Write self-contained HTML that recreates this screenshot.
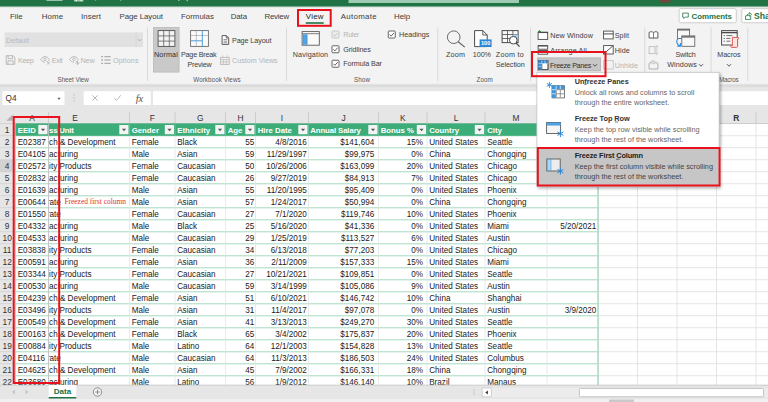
<!DOCTYPE html>
<html><head><meta charset="utf-8"><title>Excel Freeze Panes</title><style>html,body{margin:0;padding:0;}body{width:768px;height:402px;overflow:hidden;position:relative;background:#f3f3f3;font-family:'Liberation Sans',sans-serif;}
span,svg{position:absolute;}svg{left:0;top:0;}span{white-space:pre;}</style></head><body>
<svg width="768" height="402" viewBox="0 0 768 402"><defs><linearGradient id="g1" x1="0" y1="0" x2="0" y2="1"><stop offset="0" stop-color="#217346"/><stop offset="0.5" stop-color="#9fc3ae"/><stop offset="1" stop-color="#f3f3f3"/></linearGradient><linearGradient id="g2" x1="0" y1="0" x2="0" y2="1"><stop offset="0" stop-color="#f0f0f0"/><stop offset="0.45" stop-color="#d9d9d9"/><stop offset="1" stop-color="#e6e6e6"/></linearGradient><filter id="sh" x="-5%" y="-5%" width="112%" height="115%"><feGaussianBlur stdDeviation="1.6"/></filter></defs><rect x="0" y="0" width="768" height="6.2" fill="#217346"/><rect x="0" y="5.8" width="768" height="2" fill="url(#g1)"/><rect x="348.5" y="0" width="170.5" height="3" fill="#9dccb2"/><rect x="46.5" y="0" width="16" height="0.8" fill="#b9d8c6"/><rect x="74" y="0" width="9.5" height="1.5" fill="#9cc7ae"/><rect x="75.5" y="0" width="1.5" height="1.2" fill="#e6f1ea"/><rect x="80.5" y="0" width="1.5" height="1.2" fill="#e6f1ea"/><rect x="95" y="0" width="1.2" height="1" fill="#6fa889"/><rect x="120" y="0" width="1.2" height="1" fill="#6fa889"/><rect x="178" y="0" width="1.5" height="1" fill="#8fbea5"/><rect x="186.5" y="0" width="1.5" height="1.2" fill="#8fbea5"/><path d="M659 0h12c0 4-12 4-12 0z" fill="#6b4a3a"/></svg>
<span style="left:10.00px;top:12px;font-size:7.9px;line-height:9px;color:#404040;letter-spacing:-0.058px;">File</span>
<span style="left:41.75px;top:12px;font-size:7.9px;line-height:9px;color:#404040;letter-spacing:0.107px;">Home</span>
<span style="left:81.00px;top:12px;font-size:7.9px;line-height:9px;color:#404040;letter-spacing:0.040px;">Insert</span>
<span style="left:119.50px;top:12px;font-size:7.9px;line-height:9px;color:#404040;letter-spacing:-0.079px;">Page Layout</span>
<span style="left:181.00px;top:12px;font-size:7.9px;line-height:9px;color:#404040;letter-spacing:0.010px;">Formulas</span>
<span style="left:230.75px;top:12px;font-size:7.9px;line-height:9px;color:#404040;letter-spacing:-0.109px;">Data</span>
<span style="left:264.50px;top:12px;font-size:7.9px;line-height:9px;color:#404040;letter-spacing:-0.234px;">Review</span>
<span style="left:305.75px;top:12px;font-size:7.9px;line-height:9px;color:#222;letter-spacing:0.255px;">View</span>
<span style="left:340.75px;top:12px;font-size:7.9px;line-height:9px;color:#404040;letter-spacing:0.304px;">Automate</span>
<span style="left:394.00px;top:12px;font-size:7.9px;line-height:9px;color:#404040;letter-spacing:-0.062px;">Help</span>
<svg width="768" height="402" viewBox="0 0 768 402"><rect x="305.75" y="22.2" width="18" height="1.6" fill="#217346"/><rect x="679.15" y="8.65" width="57.1" height="14.1" fill="#fff" stroke="#c8c8c8" stroke-width="0.9" rx="1.5"/><g transform="translate(682.2,12.6)"><path d="M0.5 0.5h5.6v4H3L1.6 5.9V4.5H0.5z" fill="none" stroke="#217346" stroke-width="0.8"/></g></svg>
<span style="left:691.50px;top:12px;font-size:7.9px;line-height:9px;color:#217346;letter-spacing:-0.040px;font-weight:700;">Comments</span>
<svg width="768" height="402" viewBox="0 0 768 402"><rect x="741.75" y="8.65" width="39.1" height="14.1" fill="#fff" stroke="#c8c8c8" stroke-width="0.9" rx="1.5"/><g transform="translate(745,12)"><path d="M0.5 3.8v3.6h5.2v-3.4M1.5 4C1.9 2.3 3.2 1.7 4.5 1.7V0.5L6.6 2.4 4.5 4.3V3.1C3.4 3 2.4 3.3 1.5 4z" fill="none" stroke="#217346" stroke-width="0.8"/></g></svg>
<span style="left:754.00px;top:11px;font-size:8.6px;line-height:10px;color:#217346;font-weight:700;">Share</span>
<svg width="768" height="402" viewBox="0 0 768 402"><rect x="4.5" y="32.4" width="138.5" height="14.6" fill="#e1e1e1"/><rect x="135.7" y="32.4" width="0.7" height="14.6" fill="#d2d2d2"/></svg>
<span style="left:6.00px;top:36px;font-size:7.2px;line-height:9px;color:#b9b9b9;letter-spacing:0.027px;">Default</span>
<svg width="768" height="402" viewBox="0 0 768 402"><g transform="translate(136.6,37.8)"><path d="M1 1.2l2 2 2-2" fill="none" stroke="#a8a8a8" stroke-width="0.8"/></g><g transform="translate(5.5,55)"><path d="M0.7 0.7h7l1.6 1.6v7H0.7z M2.6 0.7v3h4.4v-3 M2.4 9.3v-3.4h5.2v3.4" fill="none" stroke="#b4b4b4" stroke-width="0.9"/></g></svg>
<span style="left:18.00px;top:56px;font-size:7.2px;line-height:9px;color:#b4b4b4;letter-spacing:-0.350px;">Keep</span>
<svg width="768" height="402" viewBox="0 0 768 402"><g transform="translate(40,55)"><path d="M0.6 4.5C2 2.3 3.8 1.6 5 1.6s3 0.7 4.4 2.9C8.6 5.8 7.8 6.4 7 6.8 M0.6 4.5C1.8 6.4 3.4 7.2 5 7.3" fill="none" stroke="#b4b4b4" stroke-width="0.9"/><circle cx="5" cy="4.4" r="1.3" fill="none" stroke="#b4b4b4" stroke-width="0.8"/><path d="M7 6.5l3 3M10 6.5l-3 3" stroke="#b4b4b4" stroke-width="0.9"/></g></svg>
<span style="left:51.75px;top:56px;font-size:7.2px;line-height:9px;color:#b4b4b4;letter-spacing:-0.313px;">Exit</span>
<svg width="768" height="402" viewBox="0 0 768 402"><g transform="translate(69,55)"><path d="M0.6 4.5C2 2.3 3.8 1.6 5 1.6s3 0.7 4.4 2.9C8.6 5.8 7.8 6.4 7 6.8 M0.6 4.5C1.8 6.4 3.4 7.2 5 7.3" fill="none" stroke="#b4b4b4" stroke-width="0.9"/><circle cx="5" cy="4.4" r="1.3" fill="none" stroke="#b4b4b4" stroke-width="0.8"/><path d="M8.5 6v4M6.5 8h4" stroke="#b4b4b4" stroke-width="0.9"/></g></svg>
<span style="left:80.50px;top:56px;font-size:7.2px;line-height:9px;color:#b4b4b4;letter-spacing:-0.135px;">New</span>
<svg width="768" height="402" viewBox="0 0 768 402"><g transform="translate(101,55.5)"><path d="M0.3 1.2h1.6M0.3 4.5h1.6M0.3 7.8h1.6" stroke="#a0a0a0" stroke-width="1.3"/><path d="M3.3 1.2h6.4M3.3 4.5h6.4M3.3 7.8h6.4" stroke="#a0a0a0" stroke-width="1"/></g></svg>
<span style="left:113.00px;top:56px;font-size:7.2px;line-height:9px;color:#b4b4b4;letter-spacing:0.134px;">Options</span>
<span style="left:57.50px;top:76px;font-size:6.3px;line-height:7px;color:#555;letter-spacing:-0.051px;">Sheet View</span>
<svg width="768" height="402" viewBox="0 0 768 402"><rect x="147.2" y="27.5" width="0.8" height="53.5" fill="#d2d2d2"/><rect x="153.4" y="27.4" width="25.7" height="44.7" fill="#c9c9c9" stroke="#b9b9b9" stroke-width="0.8"/><g transform="translate(157.5,30)"><rect x="0.6" y="0.6" width="16.8" height="15.8" fill="#f2f2f2" stroke="#505050" stroke-width="0.9"/><path d="M6.2 0.6v15.8M11.8 0.6v15.8M0.6 5.9h16.8M0.6 11.1h16.8" stroke="#5a5a5a" stroke-width="0.75"/></g></svg>
<span style="left:154.00px;top:50px;font-size:7.2px;line-height:9px;color:#303030;letter-spacing:0.133px;">Normal</span>
<svg width="768" height="402" viewBox="0 0 768 402"><g transform="translate(190,30)"><rect x="0.6" y="0.6" width="17.8" height="15.8" fill="#fafafa" stroke="#6a6a6a" stroke-width="0.9"/><path d="M6.3 0.6v15.8M0.6 5.5h17.8" stroke="#9a9a9a" stroke-width="0.6"/><path d="M12.3 0.6v15.8M0.6 10.8h11.7" stroke="#3a96dd" stroke-width="0.9"/></g></svg>
<span style="left:181.00px;top:50px;font-size:7.2px;line-height:9px;color:#404040;letter-spacing:-0.212px;">Page Break</span>
<span style="left:187.50px;top:60px;font-size:7.2px;line-height:9px;color:#404040;letter-spacing:-0.230px;">Preview</span>
<svg width="768" height="402" viewBox="0 0 768 402"><g transform="translate(221.5,35)"><path d="M0.6 0.6h4.2l2.4 2.4v6.4H0.6z" fill="#fff" stroke="#4a4a4a" stroke-width="0.9"/><path d="M4.8 0.6v2.4h2.4" fill="none" stroke="#4a4a4a" stroke-width="0.8"/><path d="M2 4.6h3.8M2 6.2h3.8M2 7.8h3.8" stroke="#4a4a4a" stroke-width="0.6"/></g></svg>
<span style="left:232.00px;top:36px;font-size:7.2px;line-height:9px;color:#404040;letter-spacing:-0.085px;">Page Layout</span>
<svg width="768" height="402" viewBox="0 0 768 402"><g transform="translate(220,55)"><rect x="0.6" y="2.4" width="8.6" height="7" fill="none" stroke="#b9b9b9" stroke-width="0.9"/><path d="M0.6 4.6h8.6M2.6 0.4v2M7 0.4v2M3.4 4.6v4.8M6.2 4.6v4.8M0.6 7h8.6" stroke="#b9b9b9" stroke-width="0.7"/></g></svg>
<span style="left:232.00px;top:56px;font-size:7.2px;line-height:9px;color:#b4b4b4;letter-spacing:-0.011px;">Custom Views</span>
<span style="left:193.25px;top:76px;font-size:6.3px;line-height:7px;color:#555;letter-spacing:0.058px;">Workbook Views</span>
<svg width="768" height="402" viewBox="0 0 768 402"><rect x="286.2" y="27.5" width="0.8" height="53.5" fill="#d2d2d2"/><g transform="translate(301.5,31)"><rect x="0.6" y="0.6" width="17.2" height="13.6" fill="#fbfbfb" stroke="#5a5a5a" stroke-width="0.9"/><path d="M0.6 2.7h17.2" stroke="#5a5a5a" stroke-width="0.8"/><rect x="1.2" y="3.3" width="4.8" height="10.4" fill="#3a96dd"/><path d="M2.6 3.3v10.4M4.4 3.3v10.4" stroke="#8cc4f0" stroke-width="0.5"/></g></svg>
<span style="left:292.75px;top:50px;font-size:7.2px;line-height:9px;color:#404040;letter-spacing:0.148px;">Navigation</span>
<svg width="768" height="402" viewBox="0 0 768 402"><g transform="translate(331.5,30.5)"><rect x="0.5" y="0.5" width="7" height="7" rx="0.8" fill="#ececec" stroke="#c4c4c4" stroke-width="0.9"/><path d="M1.9 4.1l1.5 1.5 2.8-3.2" fill="none" stroke="#c4c4c4" stroke-width="0.9"/></g></svg>
<span style="left:343.25px;top:30px;font-size:7.2px;line-height:9px;color:#b4b4b4;letter-spacing:-0.291px;">Ruler</span>
<svg width="768" height="402" viewBox="0 0 768 402"><g transform="translate(331.5,45.25)"><rect x="0.5" y="0.5" width="7" height="7" rx="0.8" fill="#fff" stroke="#555" stroke-width="0.9"/><path d="M1.9 4.1l1.5 1.5 2.8-3.2" fill="none" stroke="#555" stroke-width="0.9"/></g></svg>
<span style="left:343.25px;top:45px;font-size:7.2px;line-height:9px;color:#404040;letter-spacing:-0.101px;">Gridlines</span>
<svg width="768" height="402" viewBox="0 0 768 402"><g transform="translate(331.5,59.75)"><rect x="0.5" y="0.5" width="7" height="7" rx="0.8" fill="#fff" stroke="#555" stroke-width="0.9"/><path d="M1.9 4.1l1.5 1.5 2.8-3.2" fill="none" stroke="#555" stroke-width="0.9"/></g></svg>
<span style="left:343.25px;top:59px;font-size:7.2px;line-height:9px;color:#404040;letter-spacing:-0.078px;">Formula Bar</span>
<svg width="768" height="402" viewBox="0 0 768 402"><g transform="translate(387.75,30.5)"><rect x="0.5" y="0.5" width="7" height="7" rx="0.8" fill="#fff" stroke="#555" stroke-width="0.9"/><path d="M1.9 4.1l1.5 1.5 2.8-3.2" fill="none" stroke="#555" stroke-width="0.9"/></g></svg>
<span style="left:399.00px;top:30px;font-size:7.2px;line-height:9px;color:#404040;letter-spacing:0.010px;">Headings</span>
<span style="left:354.00px;top:76px;font-size:6.3px;line-height:7px;color:#555;letter-spacing:0.060px;">Show</span>
<svg width="768" height="402" viewBox="0 0 768 402"><rect x="437.4" y="27.5" width="0.8" height="53.5" fill="#d2d2d2"/><g transform="translate(446.5,30)"><circle cx="7.2" cy="7.2" r="6.3" fill="none" stroke="#5a5a5a" stroke-width="0.9"/><path d="M11.7 11.7l6.6 5.4" stroke="#5a5a5a" stroke-width="1.1"/></g></svg>
<span style="left:446.00px;top:50px;font-size:7.2px;line-height:9px;color:#404040;letter-spacing:0.211px;">Zoom</span>
<svg width="768" height="402" viewBox="0 0 768 402"><g transform="translate(474,30)"><path d="M0.6 0.6h8.2l4.4 4.4v11.6H0.6z" fill="#fff" stroke="#4a4a4a" stroke-width="1"/><path d="M8.8 0.6v4.4h4.4" fill="none" stroke="#4a4a4a" stroke-width="0.9"/><rect x="5.6" y="9.4" width="12" height="7.6" fill="#2b88d8"/><text x="11.6" y="15.3" font-size="5.6" font-family="Liberation Sans,sans-serif" fill="#fff" text-anchor="middle" font-weight="700">100</text></g></svg>
<span style="left:472.75px;top:50px;font-size:7.2px;line-height:9px;color:#404040;letter-spacing:-0.041px;">100%</span>
<svg width="768" height="402" viewBox="0 0 768 402"><g transform="translate(501.5,30)"><rect x="0.6" y="0.6" width="16" height="12" fill="#fafafa" stroke="#4a4a4a" stroke-width="1"/><path d="M0.6 4.5h16M0.6 8.5h8M6 0.6v12M11.4 0.6v5" stroke="#4a4a4a" stroke-width="0.8"/><rect x="11.4" y="4.5" width="5.2" height="4" fill="#9fd0f5"/><circle cx="11.8" cy="10.2" r="3.8" fill="#fff" stroke="#4a4a4a" stroke-width="1"/><path d="M14.5 13l3.6 3.6" stroke="#4a4a4a" stroke-width="1.2"/></g></svg>
<span style="left:495.75px;top:50px;font-size:7.2px;line-height:9px;color:#404040;letter-spacing:0.263px;">Zoom to</span>
<span style="left:495.75px;top:60px;font-size:7.2px;line-height:9px;color:#404040;letter-spacing:-0.069px;">Selection</span>
<span style="left:476.50px;top:76px;font-size:6.3px;line-height:7px;color:#555;letter-spacing:0.036px;">Zoom</span>
<svg width="768" height="402" viewBox="0 0 768 402"><rect x="530" y="27.5" width="0.8" height="53.5" fill="#d2d2d2"/><g transform="translate(537.5,30)"><rect x="0.6" y="2.4" width="9.6" height="7" fill="#fff" stroke="#4a4a4a" stroke-width="0.9"/><path d="M0.6 2.4h9.6" stroke="#4a4a4a" stroke-width="1.3"/><path d="M2 0v3M0.5 1.5h3" stroke="#1e8e3e" stroke-width="0.9"/></g></svg>
<span style="left:550.25px;top:31px;font-size:7.2px;line-height:9px;color:#404040;letter-spacing:0.074px;">New Window</span>
<svg width="768" height="402" viewBox="0 0 768 402"><g transform="translate(537.5,45)"><rect x="0.6" y="0.6" width="9.6" height="3.6" fill="#fff" stroke="#4a4a4a" stroke-width="0.9"/><rect x="0.6" y="5.6" width="9.6" height="3.6" fill="#fff" stroke="#4a4a4a" stroke-width="0.9"/><path d="M0.6 1h9.6M0.6 6h9.6" stroke="#4a4a4a" stroke-width="1.2"/></g></svg>
<span style="left:550.25px;top:46px;font-size:7.2px;line-height:9px;color:#404040;letter-spacing:0.139px;">Arrange All</span>
<svg width="768" height="402" viewBox="0 0 768 402"><rect x="537.4" y="57.9" width="63.2" height="12.9" fill="#c6c6c6" stroke="#b0b0b0" stroke-width="0.8"/><g transform="translate(538,60)"><rect x="0.5" y="0.5" width="9.5" height="9" fill="#fff" stroke="#4a4a4a" stroke-width="0.8"/><rect x="0.5" y="0.5" width="3.4" height="9" fill="#2b88d8"/><rect x="0.5" y="0.5" width="9.5" height="3.2" fill="#2b88d8"/><path d="M3.9 0.5v9M7 0.5v9M0.5 3.7h9.5M0.5 6.6h9.5" stroke="#fff" stroke-width="0.6"/><path d="M3.9 3.7v5.8h6.1V3.7" fill="none" stroke="#4a4a4a" stroke-width="0.7"/></g></svg>
<span style="left:550.00px;top:61px;font-size:7.2px;line-height:9px;color:#303030;letter-spacing:-0.319px;">Freeze Panes</span>
<svg width="768" height="402" viewBox="0 0 768 402"><g transform="translate(592,63)"><path d="M1 1.2l2 2 2-2" fill="none" stroke="#444" stroke-width="0.9"/></g><g transform="translate(603,30.5)"><rect x="0.6" y="0.6" width="9.6" height="7.8" fill="#fff" stroke="#4a4a4a" stroke-width="0.9"/><path d="M0.6 3.4h9.6" stroke="#4a4a4a" stroke-width="1"/></g></svg>
<span style="left:614.75px;top:31px;font-size:7.2px;line-height:9px;color:#404040;letter-spacing:0.049px;">Split</span>
<svg width="768" height="402" viewBox="0 0 768 402"><g transform="translate(603,45)"><rect x="0.6" y="0.6" width="9.6" height="8.4" fill="#fff" stroke="#4a4a4a" stroke-width="0.9"/><path d="M0.6 9L10.2 0.6" stroke="#4a4a4a" stroke-width="0.9"/></g></svg>
<span style="left:614.75px;top:46px;font-size:7.2px;line-height:9px;color:#404040;letter-spacing:0.048px;">Hide</span>
<svg width="768" height="402" viewBox="0 0 768 402"><g transform="translate(603,60)"><rect x="0.6" y="0.6" width="9.6" height="8.4" fill="none" stroke="#c4c4c4" stroke-width="0.9"/></g></svg>
<span style="left:614.75px;top:61px;font-size:7.2px;line-height:9px;color:#b4b4b4;letter-spacing:0.072px;">Unhide</span>
<svg width="768" height="402" viewBox="0 0 768 402"><rect x="644.4" y="27.5" width="0.8" height="48" fill="#d2d2d2"/><g transform="translate(648.5,31)"><path d="M0.6 7V1.4c1.6-1 3-1 4.4 0.3C6.4 0.4 7.8 0.4 9.4 1.4V7H6c-0.5 0-0.8 0.3-1 0.6C4.8 7.3 4.5 7 4 7z" fill="#fff" stroke="#4a4a4a" stroke-width="0.9"/><path d="M5 1.7v5.6" stroke="#4a4a4a" stroke-width="0.7"/></g><g transform="translate(648.5,45)"><rect x="0.6" y="1.6" width="6" height="7" fill="none" stroke="#bdbdbd" stroke-width="0.9"/><path d="M8.4 0.6v9M7.4 2l1-1.4 1 1.4M7.4 8.2l1 1.4 1-1.4" fill="none" stroke="#bdbdbd" stroke-width="0.7"/></g><g transform="translate(648.5,60)"><path d="M0.6 9V3.4c1.6-1 3-1 4.4 0.3C6.4 2.4 7.8 2.4 9.4 3.4V9z" fill="none" stroke="#a8a8a8" stroke-width="0.9"/><path d="M2 2.4c1-2 4-2 5 0" fill="none" stroke="#a8a8a8" stroke-width="0.8"/></g><g transform="translate(676,28.5)"><rect x="1.6" y="0.6" width="12" height="9.4" fill="#f8f8f8" stroke="#5a5a5a" stroke-width="0.8"/><path d="M1.6 1.4h12" stroke="#5a5a5a" stroke-width="1.2"/><rect x="5.8" y="7.4" width="13" height="10.4" fill="#f8f8f8" stroke="#5a5a5a" stroke-width="0.8"/><path d="M5.8 8.4h13" stroke="#5a5a5a" stroke-width="1.3"/><path d="M2.4 9.6C-0.4 12 0.4 16 4 17.6M4.4 14.6v3.2H1.2" fill="none" stroke="#2b88d8" stroke-width="1.1"/></g></svg>
<span style="left:675.50px;top:50px;font-size:7.2px;line-height:9px;color:#404040;letter-spacing:-0.201px;">Switch</span>
<span style="left:667.25px;top:60px;font-size:7.2px;line-height:9px;color:#404040;letter-spacing:0.077px;">Windows</span>
<svg width="768" height="402" viewBox="0 0 768 402"><g transform="translate(698,63)"><path d="M1 1.2l2 2 2-2" fill="none" stroke="#444" stroke-width="0.9"/></g><rect x="710.6" y="27.5" width="0.8" height="53.5" fill="#d2d2d2"/><g transform="translate(721,30)"><rect x="0.6" y="0.6" width="15.6" height="14.4" fill="#fafafa" stroke="#4a4a4a" stroke-width="1"/><path d="M0.6 2.6h15.6" stroke="#4a4a4a" stroke-width="1.4"/><path d="M2.6 5.6h1.4M2.6 8.4h1.4M2.6 11.2h1.4M5.4 5.6h6M5.4 8.4h4M5.4 11.2h4" stroke="#4a4a4a" stroke-width="0.8"/><path d="M11.4 7.4h5.6c1 0 1 1.6 0 1.6h-0.4v7.4c0 0.6-0.4 1-1 1h-5c-1.2 0-1.2-1.8 0-1.8h0.8z" fill="#fde7e5" stroke="#e8473f" stroke-width="0.9"/></g></svg>
<span style="left:717.25px;top:50px;font-size:7.2px;line-height:9px;color:#404040;letter-spacing:-0.059px;">Macros</span>
<svg width="768" height="402" viewBox="0 0 768 402"><g transform="translate(726,63)"><path d="M1 1.2l2 2 2-2" fill="none" stroke="#444" stroke-width="0.9"/></g></svg>
<span style="left:719.00px;top:76px;font-size:6.3px;line-height:7px;color:#555;letter-spacing:-0.192px;">Macros</span>
<svg width="768" height="402" viewBox="0 0 768 402"><rect x="747.4" y="27.5" width="0.8" height="53.5" fill="#d2d2d2"/><rect x="0" y="83.3" width="768" height="5" fill="url(#g2)"/><rect x="0" y="87.5" width="768" height="36.5" fill="#e6e6e6"/><rect x="2.5" y="91.2" width="62" height="14" fill="#fff"/></svg>
<span style="left:5.50px;top:94px;font-size:8.25px;line-height:9px;color:#333;">Q4</span>
<svg width="768" height="402" viewBox="0 0 768 402"><g transform="translate(56.5,97)"><path d="M0.8 0.8h3.4L2.5 3z" fill="#666"/></g><rect x="73.6" y="94.5" width="0.9" height="0.9" fill="#9a9a9a"/><rect x="73.6" y="97.5" width="0.9" height="0.9" fill="#9a9a9a"/><rect x="73.6" y="100.5" width="0.9" height="0.9" fill="#9a9a9a"/><rect x="83.75" y="91.2" width="67" height="14" fill="#fff"/><g transform="translate(91.5,94.5)"><path d="M0.8 0.8l5.4 5.4M6.2 0.8L0.8 6.2" stroke="#a6a6a6" stroke-width="0.8"/></g><g transform="translate(113.5,94.5)"><path d="M0.8 3.8l2.2 2.2L7.2 0.8" fill="none" stroke="#a6a6a6" stroke-width="0.8"/></g></svg>
<span style="left:135.63px;top:93px;font-size:10.5px;line-height:11px;color:#555;font-family:'Liberation Serif',serif;font-style:italic;">fx</span>
<svg width="768" height="402" viewBox="0 0 768 402"><rect x="153" y="91.2" width="615" height="14" fill="#fff"/><rect x="0" y="123.8" width="768" height="261.2" fill="#fff"/><rect x="0" y="105" width="768" height="18.8" fill="#e6e6e6"/><rect x="0" y="123.1" width="768" height="0.8" fill="#c8c8c8"/><g transform="translate(6,114.2)"><path d="M6.6 0.4v6.2H0.4z" fill="#b2b2b2"/></g></svg>
<span style="left:29.20px;top:113px;font-size:8.4px;line-height:10px;color:#333;">A</span>
<svg width="768" height="402" viewBox="0 0 768 402"><rect x="48.1" y="112" width="0.8" height="11.5" fill="#c6c6c6"/></svg>
<span style="left:72.20px;top:113px;font-size:8.4px;line-height:10px;color:#333;">E</span>
<svg width="768" height="402" viewBox="0 0 768 402"><rect x="129.1" y="112" width="0.8" height="11.5" fill="#c6c6c6"/></svg>
<span style="left:149.68px;top:113px;font-size:8.4px;line-height:10px;color:#333;">F</span>
<svg width="768" height="402" viewBox="0 0 768 402"><rect x="174.6" y="112" width="0.8" height="11.5" fill="#c6c6c6"/></svg>
<span style="left:196.98px;top:113px;font-size:8.4px;line-height:10px;color:#333;">G</span>
<svg width="768" height="402" viewBox="0 0 768 402"><rect x="225.1" y="112" width="0.8" height="11.5" fill="#c6c6c6"/></svg>
<span style="left:237.47px;top:113px;font-size:8.4px;line-height:10px;color:#333;">H</span>
<svg width="768" height="402" viewBox="0 0 768 402"><rect x="255.1" y="112" width="0.8" height="11.5" fill="#c6c6c6"/></svg>
<span style="left:280.83px;top:113px;font-size:8.4px;line-height:10px;color:#333;">I</span>
<svg width="768" height="402" viewBox="0 0 768 402"><rect x="308.1" y="112" width="0.8" height="11.5" fill="#c6c6c6"/></svg>
<span style="left:341.40px;top:113px;font-size:8.4px;line-height:10px;color:#333;">J</span>
<svg width="768" height="402" viewBox="0 0 768 402"><rect x="378.1" y="112" width="0.8" height="11.5" fill="#c6c6c6"/></svg>
<span style="left:399.95px;top:113px;font-size:8.4px;line-height:10px;color:#333;">K</span>
<svg width="768" height="402" viewBox="0 0 768 402"><rect x="426.6" y="112" width="0.8" height="11.5" fill="#c6c6c6"/></svg>
<span style="left:453.66px;top:113px;font-size:8.4px;line-height:10px;color:#333;">L</span>
<svg width="768" height="402" viewBox="0 0 768 402"><rect x="484.6" y="112" width="0.8" height="11.5" fill="#c6c6c6"/></svg>
<span style="left:512.50px;top:113px;font-size:8.4px;line-height:10px;color:#333;">M</span>
<svg width="768" height="402" viewBox="0 0 768 402"><rect x="546.6" y="112" width="0.8" height="11.5" fill="#c6c6c6"/></svg>
<span style="left:569.47px;top:113px;font-size:8.4px;line-height:10px;color:#333;">N</span>
<svg width="768" height="402" viewBox="0 0 768 402"><rect x="597.6" y="112" width="0.8" height="11.5" fill="#c6c6c6"/></svg>
<span style="left:614.48px;top:113px;font-size:8.4px;line-height:10px;color:#333;">O</span>
<svg width="768" height="402" viewBox="0 0 768 402"><rect x="637.1" y="112" width="0.8" height="11.5" fill="#c6c6c6"/></svg>
<span style="left:654.45px;top:113px;font-size:8.4px;line-height:10px;color:#333;">P</span>
<svg width="768" height="402" viewBox="0 0 768 402"><rect x="676.6" y="112" width="0.8" height="11.5" fill="#c6c6c6"/></svg>
<span style="left:693.48px;top:113px;font-size:8.4px;line-height:10px;color:#333;">Q</span>
<svg width="768" height="402" viewBox="0 0 768 402"><rect x="716.1" y="112" width="0.8" height="11.5" fill="#c6c6c6"/></svg>
<span style="left:733.22px;top:113px;font-size:8.4px;line-height:10px;color:#333;font-weight:700;">R</span>
<svg width="768" height="402" viewBox="0 0 768 402"><rect x="755.6" y="112" width="0.8" height="11.5" fill="#c6c6c6"/></svg>
<span style="left:772.70px;top:113px;font-size:8.4px;line-height:10px;color:#333;">S</span>
<svg width="768" height="402" viewBox="0 0 768 402"><rect x="794.6" y="112" width="0.8" height="11.5" fill="#c6c6c6"/><rect x="0" y="123.8" width="15.5" height="261.2" fill="#e6e6e6"/><rect x="0" y="159.8" width="15.5" height="12" fill="#d2d2d2"/><rect x="15" y="123.8" width="0.8" height="261.2" fill="#c4c4c4"/></svg>
<span style="left:4.86px;top:125px;font-size:8.4px;line-height:10px;color:#333;">1</span>
<svg width="768" height="402" viewBox="0 0 768 402"><rect x="0" y="135.4" width="15.5" height="0.7" fill="#cfcfcf"/></svg>
<span style="left:4.86px;top:137px;font-size:8.4px;line-height:10px;color:#333;">2</span>
<svg width="768" height="402" viewBox="0 0 768 402"><rect x="0" y="147.4" width="15.5" height="0.7" fill="#cfcfcf"/></svg>
<span style="left:4.86px;top:149px;font-size:8.4px;line-height:10px;color:#333;">3</span>
<svg width="768" height="402" viewBox="0 0 768 402"><rect x="0" y="159.4" width="15.5" height="0.7" fill="#cfcfcf"/></svg>
<span style="left:4.86px;top:161px;font-size:8.4px;line-height:10px;color:#333;">4</span>
<svg width="768" height="402" viewBox="0 0 768 402"><rect x="0" y="171.4" width="15.5" height="0.7" fill="#cfcfcf"/></svg>
<span style="left:4.86px;top:173px;font-size:8.4px;line-height:10px;color:#333;">5</span>
<svg width="768" height="402" viewBox="0 0 768 402"><rect x="0" y="183.4" width="15.5" height="0.7" fill="#cfcfcf"/></svg>
<span style="left:4.86px;top:185px;font-size:8.4px;line-height:10px;color:#333;">6</span>
<svg width="768" height="402" viewBox="0 0 768 402"><rect x="0" y="195.4" width="15.5" height="0.7" fill="#cfcfcf"/></svg>
<span style="left:4.86px;top:197px;font-size:8.4px;line-height:10px;color:#333;">7</span>
<svg width="768" height="402" viewBox="0 0 768 402"><rect x="0" y="207.4" width="15.5" height="0.7" fill="#cfcfcf"/></svg>
<span style="left:4.86px;top:209px;font-size:8.4px;line-height:10px;color:#333;">8</span>
<svg width="768" height="402" viewBox="0 0 768 402"><rect x="0" y="219.4" width="15.5" height="0.7" fill="#cfcfcf"/></svg>
<span style="left:4.86px;top:221px;font-size:8.4px;line-height:10px;color:#333;">9</span>
<svg width="768" height="402" viewBox="0 0 768 402"><rect x="0" y="231.4" width="15.5" height="0.7" fill="#cfcfcf"/></svg>
<span style="left:2.53px;top:233px;font-size:8.4px;line-height:10px;color:#333;">10</span>
<svg width="768" height="402" viewBox="0 0 768 402"><rect x="0" y="243.4" width="15.5" height="0.7" fill="#cfcfcf"/></svg>
<span style="left:2.84px;top:245px;font-size:8.4px;line-height:10px;color:#333;">11</span>
<svg width="768" height="402" viewBox="0 0 768 402"><rect x="0" y="255.4" width="15.5" height="0.7" fill="#cfcfcf"/></svg>
<span style="left:2.53px;top:257px;font-size:8.4px;line-height:10px;color:#333;">12</span>
<svg width="768" height="402" viewBox="0 0 768 402"><rect x="0" y="267.4" width="15.5" height="0.7" fill="#cfcfcf"/></svg>
<span style="left:2.53px;top:269px;font-size:8.4px;line-height:10px;color:#333;">13</span>
<svg width="768" height="402" viewBox="0 0 768 402"><rect x="0" y="279.4" width="15.5" height="0.7" fill="#cfcfcf"/></svg>
<span style="left:2.53px;top:281px;font-size:8.4px;line-height:10px;color:#333;">14</span>
<svg width="768" height="402" viewBox="0 0 768 402"><rect x="0" y="291.4" width="15.5" height="0.7" fill="#cfcfcf"/></svg>
<span style="left:2.53px;top:293px;font-size:8.4px;line-height:10px;color:#333;">15</span>
<svg width="768" height="402" viewBox="0 0 768 402"><rect x="0" y="303.4" width="15.5" height="0.7" fill="#cfcfcf"/></svg>
<span style="left:2.53px;top:305px;font-size:8.4px;line-height:10px;color:#333;">16</span>
<svg width="768" height="402" viewBox="0 0 768 402"><rect x="0" y="315.4" width="15.5" height="0.7" fill="#cfcfcf"/></svg>
<span style="left:2.53px;top:317px;font-size:8.4px;line-height:10px;color:#333;">17</span>
<svg width="768" height="402" viewBox="0 0 768 402"><rect x="0" y="327.4" width="15.5" height="0.7" fill="#cfcfcf"/></svg>
<span style="left:2.53px;top:329px;font-size:8.4px;line-height:10px;color:#333;">18</span>
<svg width="768" height="402" viewBox="0 0 768 402"><rect x="0" y="339.4" width="15.5" height="0.7" fill="#cfcfcf"/></svg>
<span style="left:2.53px;top:341px;font-size:8.4px;line-height:10px;color:#333;">19</span>
<svg width="768" height="402" viewBox="0 0 768 402"><rect x="0" y="351.4" width="15.5" height="0.7" fill="#cfcfcf"/></svg>
<span style="left:2.53px;top:353px;font-size:8.4px;line-height:10px;color:#333;">20</span>
<svg width="768" height="402" viewBox="0 0 768 402"><rect x="0" y="363.4" width="15.5" height="0.7" fill="#cfcfcf"/></svg>
<span style="left:2.53px;top:365px;font-size:8.4px;line-height:10px;color:#333;">21</span>
<svg width="768" height="402" viewBox="0 0 768 402"><rect x="0" y="375.4" width="15.5" height="0.7" fill="#cfcfcf"/></svg>
<span style="left:2.53px;top:377px;font-size:8.4px;line-height:10px;color:#333;">22</span>
<svg width="768" height="402" viewBox="0 0 768 402"><rect x="0" y="387.4" width="15.5" height="0.7" fill="#cfcfcf"/><rect x="597.6" y="123.8" width="0.8" height="261.2" fill="#dedede"/><rect x="637.1" y="123.8" width="0.8" height="261.2" fill="#dedede"/><rect x="676.6" y="123.8" width="0.8" height="261.2" fill="#dedede"/><rect x="716.1" y="123.8" width="0.8" height="261.2" fill="#dedede"/><rect x="755.6" y="123.8" width="0.8" height="261.2" fill="#dedede"/><rect x="794.6" y="123.8" width="0.8" height="261.2" fill="#dedede"/><rect x="598" y="135.4" width="170" height="0.8" fill="#dedede"/><rect x="598" y="147.4" width="170" height="0.8" fill="#dedede"/><rect x="598" y="159.4" width="170" height="0.8" fill="#dedede"/><rect x="598" y="171.4" width="170" height="0.8" fill="#dedede"/><rect x="598" y="183.4" width="170" height="0.8" fill="#dedede"/><rect x="598" y="195.4" width="170" height="0.8" fill="#dedede"/><rect x="598" y="207.4" width="170" height="0.8" fill="#dedede"/><rect x="598" y="219.4" width="170" height="0.8" fill="#dedede"/><rect x="598" y="231.4" width="170" height="0.8" fill="#dedede"/><rect x="598" y="243.4" width="170" height="0.8" fill="#dedede"/><rect x="598" y="255.4" width="170" height="0.8" fill="#dedede"/><rect x="598" y="267.4" width="170" height="0.8" fill="#dedede"/><rect x="598" y="279.4" width="170" height="0.8" fill="#dedede"/><rect x="598" y="291.4" width="170" height="0.8" fill="#dedede"/><rect x="598" y="303.4" width="170" height="0.8" fill="#dedede"/><rect x="598" y="315.4" width="170" height="0.8" fill="#dedede"/><rect x="598" y="327.4" width="170" height="0.8" fill="#dedede"/><rect x="598" y="339.4" width="170" height="0.8" fill="#dedede"/><rect x="598" y="351.4" width="170" height="0.8" fill="#dedede"/><rect x="598" y="363.4" width="170" height="0.8" fill="#dedede"/><rect x="598" y="375.4" width="170" height="0.8" fill="#dedede"/><rect x="598" y="387.4" width="170" height="0.8" fill="#dedede"/><rect x="15.5" y="135.3" width="582.5" height="1" fill="#a5d9bf"/><rect x="15.5" y="147.3" width="582.5" height="1" fill="#a5d9bf"/><rect x="15.5" y="159.3" width="582.5" height="1" fill="#a5d9bf"/><rect x="15.5" y="171.3" width="582.5" height="1" fill="#a5d9bf"/><rect x="15.5" y="183.3" width="582.5" height="1" fill="#a5d9bf"/><rect x="15.5" y="195.3" width="582.5" height="1" fill="#a5d9bf"/><rect x="15.5" y="207.3" width="582.5" height="1" fill="#a5d9bf"/><rect x="15.5" y="219.3" width="582.5" height="1" fill="#a5d9bf"/><rect x="15.5" y="231.3" width="582.5" height="1" fill="#a5d9bf"/><rect x="15.5" y="243.3" width="582.5" height="1" fill="#a5d9bf"/><rect x="15.5" y="255.3" width="582.5" height="1" fill="#a5d9bf"/><rect x="15.5" y="267.3" width="582.5" height="1" fill="#a5d9bf"/><rect x="15.5" y="279.3" width="582.5" height="1" fill="#a5d9bf"/><rect x="15.5" y="291.3" width="582.5" height="1" fill="#a5d9bf"/><rect x="15.5" y="303.3" width="582.5" height="1" fill="#a5d9bf"/><rect x="15.5" y="315.3" width="582.5" height="1" fill="#a5d9bf"/><rect x="15.5" y="327.3" width="582.5" height="1" fill="#a5d9bf"/><rect x="15.5" y="339.3" width="582.5" height="1" fill="#a5d9bf"/><rect x="15.5" y="351.3" width="582.5" height="1" fill="#a5d9bf"/><rect x="15.5" y="363.3" width="582.5" height="1" fill="#a5d9bf"/><rect x="15.5" y="375.3" width="582.5" height="1" fill="#a5d9bf"/><rect x="15.5" y="387.3" width="582.5" height="1" fill="#a5d9bf"/><rect x="48.1" y="135.8" width="0.8" height="249.2" fill="#e2e6e4"/><rect x="129.1" y="135.8" width="0.8" height="249.2" fill="#e2e6e4"/><rect x="174.6" y="135.8" width="0.8" height="249.2" fill="#e2e6e4"/><rect x="225.1" y="135.8" width="0.8" height="249.2" fill="#e2e6e4"/><rect x="255.1" y="135.8" width="0.8" height="249.2" fill="#e2e6e4"/><rect x="308.1" y="135.8" width="0.8" height="249.2" fill="#e2e6e4"/><rect x="378.1" y="135.8" width="0.8" height="249.2" fill="#e2e6e4"/><rect x="426.6" y="135.8" width="0.8" height="249.2" fill="#e2e6e4"/><rect x="484.6" y="135.8" width="0.8" height="249.2" fill="#e2e6e4"/><rect x="546.6" y="135.8" width="0.8" height="249.2" fill="#e2e6e4"/><rect x="597.6" y="135.8" width="0.8" height="249.2" fill="#e2e6e4"/><rect x="597.6" y="123.8" width="0.9" height="261.2" fill="#8fcfae"/><rect x="15.5" y="123.4" width="531.5" height="12.4" fill="#3cad79"/><rect x="48.1" y="123.8" width="0.8" height="12.0" fill="#6cc39b"/><rect x="129.1" y="123.8" width="0.8" height="12.0" fill="#6cc39b"/><rect x="174.6" y="123.8" width="0.8" height="12.0" fill="#6cc39b"/><rect x="225.1" y="123.8" width="0.8" height="12.0" fill="#6cc39b"/><rect x="255.1" y="123.8" width="0.8" height="12.0" fill="#6cc39b"/><rect x="308.1" y="123.8" width="0.8" height="12.0" fill="#6cc39b"/><rect x="378.1" y="123.8" width="0.8" height="12.0" fill="#6cc39b"/><rect x="426.6" y="123.8" width="0.8" height="12.0" fill="#6cc39b"/><rect x="484.6" y="123.8" width="0.8" height="12.0" fill="#6cc39b"/><rect x="48.1" y="123.8" width="0.8" height="261.2" fill="#bdbdbd"/></svg>
<span style="left:17.70px;top:126px;font-size:7.8px;line-height:9px;color:#fff;font-weight:700;">EEID</span>
<svg width="768" height="402" viewBox="0 0 768 402"><rect x="38.3" y="124.9" width="9.2" height="9.3" fill="#f4f4f4" rx="0.5"/><g transform="translate(40.5,128.2)"><path d="M0.4 0.5h4.2L2.5 3z" fill="#555"/></g></svg>
<span style="left:49.00px;top:126px;font-size:7.8px;line-height:9px;color:#fff;letter-spacing:-0.201px;font-weight:700;">ss Unit</span>
<svg width="768" height="402" viewBox="0 0 768 402"><rect x="119.3" y="124.9" width="9.2" height="9.3" fill="#f4f4f4" rx="0.5"/><g transform="translate(121.5,128.2)"><path d="M0.4 0.5h4.2L2.5 3z" fill="#555"/></g></svg>
<span style="left:131.70px;top:126px;font-size:7.8px;line-height:9px;color:#fff;font-weight:700;">Gender</span>
<svg width="768" height="402" viewBox="0 0 768 402"><rect x="164.8" y="124.9" width="9.2" height="9.3" fill="#f4f4f4" rx="0.5"/><g transform="translate(167.0,128.2)"><path d="M0.4 0.5h4.2L2.5 3z" fill="#555"/></g></svg>
<span style="left:177.20px;top:126px;font-size:7.8px;line-height:9px;color:#fff;font-weight:700;">Ethnicity</span>
<svg width="768" height="402" viewBox="0 0 768 402"><rect x="215.3" y="124.9" width="9.2" height="9.3" fill="#f4f4f4" rx="0.5"/><g transform="translate(217.5,128.2)"><path d="M0.4 0.5h4.2L2.5 3z" fill="#555"/></g></svg>
<span style="left:227.70px;top:126px;font-size:7.8px;line-height:9px;color:#fff;font-weight:700;">Age</span>
<svg width="768" height="402" viewBox="0 0 768 402"><rect x="245.3" y="124.9" width="9.2" height="9.3" fill="#f4f4f4" rx="0.5"/><g transform="translate(247.5,128.2)"><path d="M0.4 0.5h4.2L2.5 3z" fill="#555"/></g></svg>
<span style="left:257.70px;top:126px;font-size:7.8px;line-height:9px;color:#fff;font-weight:700;">Hire Date</span>
<svg width="768" height="402" viewBox="0 0 768 402"><rect x="298.3" y="124.9" width="9.2" height="9.3" fill="#f4f4f4" rx="0.5"/><g transform="translate(300.5,128.2)"><path d="M0.4 0.5h4.2L2.5 3z" fill="#555"/></g></svg>
<span style="left:310.30px;top:126px;font-size:7.8px;line-height:9px;color:#fff;letter-spacing:-0.117px;font-weight:700;">Annual Salary</span>
<svg width="768" height="402" viewBox="0 0 768 402"><rect x="368.3" y="124.9" width="9.2" height="9.3" fill="#f4f4f4" rx="0.5"/><g transform="translate(370.5,128.2)"><path d="M0.4 0.5h4.2L2.5 3z" fill="#555"/></g></svg>
<span style="left:380.70px;top:126px;font-size:7.8px;line-height:9px;color:#fff;font-weight:700;">Bonus %</span>
<svg width="768" height="402" viewBox="0 0 768 402"><rect x="416.8" y="124.9" width="9.2" height="9.3" fill="#f4f4f4" rx="0.5"/><g transform="translate(419.0,128.2)"><path d="M0.4 0.5h4.2L2.5 3z" fill="#555"/></g></svg>
<span style="left:429.20px;top:126px;font-size:7.8px;line-height:9px;color:#fff;font-weight:700;">Country</span>
<svg width="768" height="402" viewBox="0 0 768 402"><rect x="474.8" y="124.9" width="9.2" height="9.3" fill="#f4f4f4" rx="0.5"/><g transform="translate(477.0,128.2)"><path d="M0.4 0.5h4.2L2.5 3z" fill="#555"/></g></svg>
<span style="left:487.20px;top:126px;font-size:7.8px;line-height:9px;color:#fff;font-weight:700;">City</span>
<span style="left:17.70px;top:138px;font-size:8.15px;line-height:9px;color:#1a1a1a;">E02387</span>
<span style="left:49.10px;top:138px;font-size:8.15px;line-height:9px;color:#1a1a1a;">ch &amp; Development</span>
<span style="left:131.70px;top:138px;font-size:8.15px;line-height:9px;color:#1a1a1a;">Female</span>
<span style="left:177.20px;top:138px;font-size:8.15px;line-height:9px;color:#1a1a1a;">Black</span>
<span style="left:245.13px;top:138px;font-size:8.15px;line-height:9px;color:#1a1a1a;">55</span>
<span style="left:275.27px;top:138px;font-size:8.15px;line-height:9px;color:#1a1a1a;">4/8/2016</span>
<span style="left:340.31px;top:138px;font-size:8.15px;line-height:9px;color:#1a1a1a;">$141,604</span>
<span style="left:406.69px;top:138px;font-size:8.15px;line-height:9px;color:#1a1a1a;">15%</span>
<span style="left:429.20px;top:138px;font-size:8.15px;line-height:9px;color:#1a1a1a;">United States</span>
<span style="left:487.20px;top:138px;font-size:8.15px;line-height:9px;color:#1a1a1a;">Seattle</span>
<span style="left:17.70px;top:150px;font-size:8.15px;line-height:9px;color:#1a1a1a;">E04105</span>
<span style="left:49.10px;top:150px;font-size:8.15px;line-height:9px;color:#1a1a1a;">acturing</span>
<span style="left:131.70px;top:150px;font-size:8.15px;line-height:9px;color:#1a1a1a;">Male</span>
<span style="left:177.20px;top:150px;font-size:8.15px;line-height:9px;color:#1a1a1a;">Asian</span>
<span style="left:245.13px;top:150px;font-size:8.15px;line-height:9px;color:#1a1a1a;">59</span>
<span style="left:266.81px;top:150px;font-size:8.15px;line-height:9px;color:#1a1a1a;">11/29/1997</span>
<span style="left:344.84px;top:150px;font-size:8.15px;line-height:9px;color:#1a1a1a;">$99,975</span>
<span style="left:411.22px;top:150px;font-size:8.15px;line-height:9px;color:#1a1a1a;">0%</span>
<span style="left:429.20px;top:150px;font-size:8.15px;line-height:9px;color:#1a1a1a;">China</span>
<span style="left:487.20px;top:150px;font-size:8.15px;line-height:9px;color:#1a1a1a;">Chongqing</span>
<span style="left:17.70px;top:162px;font-size:8.15px;line-height:9px;color:#1a1a1a;">E02572</span>
<span style="left:49.10px;top:162px;font-size:8.15px;line-height:9px;color:#1a1a1a;">ity Products</span>
<span style="left:131.70px;top:162px;font-size:8.15px;line-height:9px;color:#1a1a1a;">Female</span>
<span style="left:177.20px;top:162px;font-size:8.15px;line-height:9px;color:#1a1a1a;">Caucasian</span>
<span style="left:245.13px;top:162px;font-size:8.15px;line-height:9px;color:#1a1a1a;">50</span>
<span style="left:266.21px;top:162px;font-size:8.15px;line-height:9px;color:#1a1a1a;">10/26/2006</span>
<span style="left:340.31px;top:162px;font-size:8.15px;line-height:9px;color:#1a1a1a;">$163,099</span>
<span style="left:406.69px;top:162px;font-size:8.15px;line-height:9px;color:#1a1a1a;">20%</span>
<span style="left:429.20px;top:162px;font-size:8.15px;line-height:9px;color:#1a1a1a;">United States</span>
<span style="left:487.20px;top:162px;font-size:8.15px;line-height:9px;color:#1a1a1a;">Chicago</span>
<span style="left:17.70px;top:174px;font-size:8.15px;line-height:9px;color:#1a1a1a;">E02832</span>
<span style="left:49.10px;top:174px;font-size:8.15px;line-height:9px;color:#1a1a1a;">acturing</span>
<span style="left:131.70px;top:174px;font-size:8.15px;line-height:9px;color:#1a1a1a;">Female</span>
<span style="left:177.20px;top:174px;font-size:8.15px;line-height:9px;color:#1a1a1a;">Caucasian</span>
<span style="left:245.13px;top:174px;font-size:8.15px;line-height:9px;color:#1a1a1a;">26</span>
<span style="left:270.74px;top:174px;font-size:8.15px;line-height:9px;color:#1a1a1a;">9/27/2019</span>
<span style="left:344.84px;top:174px;font-size:8.15px;line-height:9px;color:#1a1a1a;">$84,913</span>
<span style="left:411.22px;top:174px;font-size:8.15px;line-height:9px;color:#1a1a1a;">7%</span>
<span style="left:429.20px;top:174px;font-size:8.15px;line-height:9px;color:#1a1a1a;">United States</span>
<span style="left:487.20px;top:174px;font-size:8.15px;line-height:9px;color:#1a1a1a;">Chicago</span>
<span style="left:17.70px;top:186px;font-size:8.15px;line-height:9px;color:#1a1a1a;">E01639</span>
<span style="left:49.10px;top:186px;font-size:8.15px;line-height:9px;color:#1a1a1a;">acturing</span>
<span style="left:131.70px;top:186px;font-size:8.15px;line-height:9px;color:#1a1a1a;">Male</span>
<span style="left:177.20px;top:186px;font-size:8.15px;line-height:9px;color:#1a1a1a;">Asian</span>
<span style="left:245.13px;top:186px;font-size:8.15px;line-height:9px;color:#1a1a1a;">55</span>
<span style="left:266.81px;top:186px;font-size:8.15px;line-height:9px;color:#1a1a1a;">11/20/1995</span>
<span style="left:344.84px;top:186px;font-size:8.15px;line-height:9px;color:#1a1a1a;">$95,409</span>
<span style="left:411.22px;top:186px;font-size:8.15px;line-height:9px;color:#1a1a1a;">0%</span>
<span style="left:429.20px;top:186px;font-size:8.15px;line-height:9px;color:#1a1a1a;">United States</span>
<span style="left:487.20px;top:186px;font-size:8.15px;line-height:9px;color:#1a1a1a;">Phoenix</span>
<span style="left:17.70px;top:198px;font-size:8.15px;line-height:9px;color:#1a1a1a;">E00644</span>
<span style="left:46.90px;top:198px;font-size:8.15px;line-height:9px;color:#1a1a1a;clip-path:inset(0 0 0 2px);">rate</span>
<span style="left:131.70px;top:198px;font-size:8.15px;line-height:9px;color:#1a1a1a;">Male</span>
<span style="left:177.20px;top:198px;font-size:8.15px;line-height:9px;color:#1a1a1a;">Asian</span>
<span style="left:245.13px;top:198px;font-size:8.15px;line-height:9px;color:#1a1a1a;">57</span>
<span style="left:270.74px;top:198px;font-size:8.15px;line-height:9px;color:#1a1a1a;">1/24/2017</span>
<span style="left:344.84px;top:198px;font-size:8.15px;line-height:9px;color:#1a1a1a;">$50,994</span>
<span style="left:411.22px;top:198px;font-size:8.15px;line-height:9px;color:#1a1a1a;">0%</span>
<span style="left:429.20px;top:198px;font-size:8.15px;line-height:9px;color:#1a1a1a;">China</span>
<span style="left:487.20px;top:198px;font-size:8.15px;line-height:9px;color:#1a1a1a;">Chongqing</span>
<span style="left:17.70px;top:210px;font-size:8.15px;line-height:9px;color:#1a1a1a;">E01550</span>
<span style="left:46.90px;top:210px;font-size:8.15px;line-height:9px;color:#1a1a1a;clip-path:inset(0 0 0 2px);">rate</span>
<span style="left:131.70px;top:210px;font-size:8.15px;line-height:9px;color:#1a1a1a;">Female</span>
<span style="left:177.20px;top:210px;font-size:8.15px;line-height:9px;color:#1a1a1a;">Caucasian</span>
<span style="left:245.13px;top:210px;font-size:8.15px;line-height:9px;color:#1a1a1a;">27</span>
<span style="left:275.27px;top:210px;font-size:8.15px;line-height:9px;color:#1a1a1a;">7/1/2020</span>
<span style="left:340.91px;top:210px;font-size:8.15px;line-height:9px;color:#1a1a1a;">$119,746</span>
<span style="left:406.69px;top:210px;font-size:8.15px;line-height:9px;color:#1a1a1a;">10%</span>
<span style="left:429.20px;top:210px;font-size:8.15px;line-height:9px;color:#1a1a1a;">United States</span>
<span style="left:487.20px;top:210px;font-size:8.15px;line-height:9px;color:#1a1a1a;">Phoenix</span>
<span style="left:17.70px;top:222px;font-size:8.15px;line-height:9px;color:#1a1a1a;">E04332</span>
<span style="left:49.10px;top:222px;font-size:8.15px;line-height:9px;color:#1a1a1a;">acturing</span>
<span style="left:131.70px;top:222px;font-size:8.15px;line-height:9px;color:#1a1a1a;">Male</span>
<span style="left:177.20px;top:222px;font-size:8.15px;line-height:9px;color:#1a1a1a;">Black</span>
<span style="left:245.13px;top:222px;font-size:8.15px;line-height:9px;color:#1a1a1a;">25</span>
<span style="left:270.74px;top:222px;font-size:8.15px;line-height:9px;color:#1a1a1a;">5/16/2020</span>
<span style="left:344.84px;top:222px;font-size:8.15px;line-height:9px;color:#1a1a1a;">$41,336</span>
<span style="left:411.22px;top:222px;font-size:8.15px;line-height:9px;color:#1a1a1a;">0%</span>
<span style="left:429.20px;top:222px;font-size:8.15px;line-height:9px;color:#1a1a1a;">United States</span>
<span style="left:487.20px;top:222px;font-size:8.15px;line-height:9px;color:#1a1a1a;">Miami</span>
<span style="left:560.24px;top:222px;font-size:8.15px;line-height:9px;color:#1a1a1a;">5/20/2021</span>
<span style="left:17.70px;top:234px;font-size:8.15px;line-height:9px;color:#1a1a1a;">E04533</span>
<span style="left:49.10px;top:234px;font-size:8.15px;line-height:9px;color:#1a1a1a;">acturing</span>
<span style="left:131.70px;top:234px;font-size:8.15px;line-height:9px;color:#1a1a1a;">Male</span>
<span style="left:177.20px;top:234px;font-size:8.15px;line-height:9px;color:#1a1a1a;">Caucasian</span>
<span style="left:245.13px;top:234px;font-size:8.15px;line-height:9px;color:#1a1a1a;">29</span>
<span style="left:270.74px;top:234px;font-size:8.15px;line-height:9px;color:#1a1a1a;">1/25/2019</span>
<span style="left:340.91px;top:234px;font-size:8.15px;line-height:9px;color:#1a1a1a;">$113,527</span>
<span style="left:411.22px;top:234px;font-size:8.15px;line-height:9px;color:#1a1a1a;">6%</span>
<span style="left:429.20px;top:234px;font-size:8.15px;line-height:9px;color:#1a1a1a;">United States</span>
<span style="left:487.20px;top:234px;font-size:8.15px;line-height:9px;color:#1a1a1a;">Austin</span>
<span style="left:17.70px;top:246px;font-size:8.15px;line-height:9px;color:#1a1a1a;">E03838</span>
<span style="left:49.10px;top:246px;font-size:8.15px;line-height:9px;color:#1a1a1a;">ity Products</span>
<span style="left:131.70px;top:246px;font-size:8.15px;line-height:9px;color:#1a1a1a;">Female</span>
<span style="left:177.20px;top:246px;font-size:8.15px;line-height:9px;color:#1a1a1a;">Caucasian</span>
<span style="left:245.13px;top:246px;font-size:8.15px;line-height:9px;color:#1a1a1a;">34</span>
<span style="left:270.74px;top:246px;font-size:8.15px;line-height:9px;color:#1a1a1a;">6/13/2018</span>
<span style="left:344.84px;top:246px;font-size:8.15px;line-height:9px;color:#1a1a1a;">$77,203</span>
<span style="left:411.22px;top:246px;font-size:8.15px;line-height:9px;color:#1a1a1a;">0%</span>
<span style="left:429.20px;top:246px;font-size:8.15px;line-height:9px;color:#1a1a1a;">United States</span>
<span style="left:487.20px;top:246px;font-size:8.15px;line-height:9px;color:#1a1a1a;">Chicago</span>
<span style="left:17.70px;top:258px;font-size:8.15px;line-height:9px;color:#1a1a1a;">E00591</span>
<span style="left:49.10px;top:258px;font-size:8.15px;line-height:9px;color:#1a1a1a;">acturing</span>
<span style="left:131.70px;top:258px;font-size:8.15px;line-height:9px;color:#1a1a1a;">Female</span>
<span style="left:177.20px;top:258px;font-size:8.15px;line-height:9px;color:#1a1a1a;">Asian</span>
<span style="left:245.13px;top:258px;font-size:8.15px;line-height:9px;color:#1a1a1a;">36</span>
<span style="left:271.35px;top:258px;font-size:8.15px;line-height:9px;color:#1a1a1a;">2/11/2009</span>
<span style="left:340.31px;top:258px;font-size:8.15px;line-height:9px;color:#1a1a1a;">$157,333</span>
<span style="left:406.69px;top:258px;font-size:8.15px;line-height:9px;color:#1a1a1a;">15%</span>
<span style="left:429.20px;top:258px;font-size:8.15px;line-height:9px;color:#1a1a1a;">United States</span>
<span style="left:487.20px;top:258px;font-size:8.15px;line-height:9px;color:#1a1a1a;">Miami</span>
<span style="left:17.70px;top:270px;font-size:8.15px;line-height:9px;color:#1a1a1a;">E03344</span>
<span style="left:49.10px;top:270px;font-size:8.15px;line-height:9px;color:#1a1a1a;">ity Products</span>
<span style="left:131.70px;top:270px;font-size:8.15px;line-height:9px;color:#1a1a1a;">Female</span>
<span style="left:177.20px;top:270px;font-size:8.15px;line-height:9px;color:#1a1a1a;">Caucasian</span>
<span style="left:245.13px;top:270px;font-size:8.15px;line-height:9px;color:#1a1a1a;">27</span>
<span style="left:266.21px;top:270px;font-size:8.15px;line-height:9px;color:#1a1a1a;">10/21/2021</span>
<span style="left:340.31px;top:270px;font-size:8.15px;line-height:9px;color:#1a1a1a;">$109,851</span>
<span style="left:411.22px;top:270px;font-size:8.15px;line-height:9px;color:#1a1a1a;">0%</span>
<span style="left:429.20px;top:270px;font-size:8.15px;line-height:9px;color:#1a1a1a;">United States</span>
<span style="left:487.20px;top:270px;font-size:8.15px;line-height:9px;color:#1a1a1a;">Seattle</span>
<span style="left:17.70px;top:282px;font-size:8.15px;line-height:9px;color:#1a1a1a;">E00530</span>
<span style="left:49.10px;top:282px;font-size:8.15px;line-height:9px;color:#1a1a1a;">acturing</span>
<span style="left:131.70px;top:282px;font-size:8.15px;line-height:9px;color:#1a1a1a;">Male</span>
<span style="left:177.20px;top:282px;font-size:8.15px;line-height:9px;color:#1a1a1a;">Caucasian</span>
<span style="left:245.13px;top:282px;font-size:8.15px;line-height:9px;color:#1a1a1a;">59</span>
<span style="left:270.74px;top:282px;font-size:8.15px;line-height:9px;color:#1a1a1a;">3/14/1999</span>
<span style="left:340.31px;top:282px;font-size:8.15px;line-height:9px;color:#1a1a1a;">$105,086</span>
<span style="left:411.22px;top:282px;font-size:8.15px;line-height:9px;color:#1a1a1a;">9%</span>
<span style="left:429.20px;top:282px;font-size:8.15px;line-height:9px;color:#1a1a1a;">United States</span>
<span style="left:487.20px;top:282px;font-size:8.15px;line-height:9px;color:#1a1a1a;">Austin</span>
<span style="left:17.70px;top:294px;font-size:8.15px;line-height:9px;color:#1a1a1a;">E04239</span>
<span style="left:49.10px;top:294px;font-size:8.15px;line-height:9px;color:#1a1a1a;">ch &amp; Development</span>
<span style="left:131.70px;top:294px;font-size:8.15px;line-height:9px;color:#1a1a1a;">Female</span>
<span style="left:177.20px;top:294px;font-size:8.15px;line-height:9px;color:#1a1a1a;">Asian</span>
<span style="left:245.13px;top:294px;font-size:8.15px;line-height:9px;color:#1a1a1a;">51</span>
<span style="left:270.74px;top:294px;font-size:8.15px;line-height:9px;color:#1a1a1a;">6/10/2021</span>
<span style="left:340.31px;top:294px;font-size:8.15px;line-height:9px;color:#1a1a1a;">$146,742</span>
<span style="left:406.69px;top:294px;font-size:8.15px;line-height:9px;color:#1a1a1a;">10%</span>
<span style="left:429.20px;top:294px;font-size:8.15px;line-height:9px;color:#1a1a1a;">China</span>
<span style="left:487.20px;top:294px;font-size:8.15px;line-height:9px;color:#1a1a1a;">Shanghai</span>
<span style="left:17.70px;top:306px;font-size:8.15px;line-height:9px;color:#1a1a1a;">E03496</span>
<span style="left:49.10px;top:306px;font-size:8.15px;line-height:9px;color:#1a1a1a;">ity Products</span>
<span style="left:131.70px;top:306px;font-size:8.15px;line-height:9px;color:#1a1a1a;">Male</span>
<span style="left:177.20px;top:306px;font-size:8.15px;line-height:9px;color:#1a1a1a;">Asian</span>
<span style="left:245.13px;top:306px;font-size:8.15px;line-height:9px;color:#1a1a1a;">31</span>
<span style="left:271.35px;top:306px;font-size:8.15px;line-height:9px;color:#1a1a1a;">11/4/2017</span>
<span style="left:344.84px;top:306px;font-size:8.15px;line-height:9px;color:#1a1a1a;">$97,078</span>
<span style="left:411.22px;top:306px;font-size:8.15px;line-height:9px;color:#1a1a1a;">0%</span>
<span style="left:429.20px;top:306px;font-size:8.15px;line-height:9px;color:#1a1a1a;">United States</span>
<span style="left:487.20px;top:306px;font-size:8.15px;line-height:9px;color:#1a1a1a;">Austin</span>
<span style="left:564.77px;top:306px;font-size:8.15px;line-height:9px;color:#1a1a1a;">3/9/2020</span>
<span style="left:17.70px;top:318px;font-size:8.15px;line-height:9px;color:#1a1a1a;">E00549</span>
<span style="left:49.10px;top:318px;font-size:8.15px;line-height:9px;color:#1a1a1a;">ch &amp; Development</span>
<span style="left:131.70px;top:318px;font-size:8.15px;line-height:9px;color:#1a1a1a;">Female</span>
<span style="left:177.20px;top:318px;font-size:8.15px;line-height:9px;color:#1a1a1a;">Asian</span>
<span style="left:245.13px;top:318px;font-size:8.15px;line-height:9px;color:#1a1a1a;">41</span>
<span style="left:270.74px;top:318px;font-size:8.15px;line-height:9px;color:#1a1a1a;">3/13/2013</span>
<span style="left:340.31px;top:318px;font-size:8.15px;line-height:9px;color:#1a1a1a;">$249,270</span>
<span style="left:406.69px;top:318px;font-size:8.15px;line-height:9px;color:#1a1a1a;">30%</span>
<span style="left:429.20px;top:318px;font-size:8.15px;line-height:9px;color:#1a1a1a;">United States</span>
<span style="left:487.20px;top:318px;font-size:8.15px;line-height:9px;color:#1a1a1a;">Seattle</span>
<span style="left:17.70px;top:330px;font-size:8.15px;line-height:9px;color:#1a1a1a;">E00163</span>
<span style="left:49.10px;top:330px;font-size:8.15px;line-height:9px;color:#1a1a1a;">ch &amp; Development</span>
<span style="left:131.70px;top:330px;font-size:8.15px;line-height:9px;color:#1a1a1a;">Female</span>
<span style="left:177.20px;top:330px;font-size:8.15px;line-height:9px;color:#1a1a1a;">Black</span>
<span style="left:245.13px;top:330px;font-size:8.15px;line-height:9px;color:#1a1a1a;">65</span>
<span style="left:275.27px;top:330px;font-size:8.15px;line-height:9px;color:#1a1a1a;">3/4/2002</span>
<span style="left:340.31px;top:330px;font-size:8.15px;line-height:9px;color:#1a1a1a;">$175,837</span>
<span style="left:406.69px;top:330px;font-size:8.15px;line-height:9px;color:#1a1a1a;">20%</span>
<span style="left:429.20px;top:330px;font-size:8.15px;line-height:9px;color:#1a1a1a;">United States</span>
<span style="left:487.20px;top:330px;font-size:8.15px;line-height:9px;color:#1a1a1a;">Phoenix</span>
<span style="left:17.70px;top:342px;font-size:8.15px;line-height:9px;color:#1a1a1a;">E00884</span>
<span style="left:49.10px;top:342px;font-size:8.15px;line-height:9px;color:#1a1a1a;">ity Products</span>
<span style="left:131.70px;top:342px;font-size:8.15px;line-height:9px;color:#1a1a1a;">Male</span>
<span style="left:177.20px;top:342px;font-size:8.15px;line-height:9px;color:#1a1a1a;">Latino</span>
<span style="left:245.13px;top:342px;font-size:8.15px;line-height:9px;color:#1a1a1a;">64</span>
<span style="left:270.74px;top:342px;font-size:8.15px;line-height:9px;color:#1a1a1a;">12/1/2003</span>
<span style="left:340.31px;top:342px;font-size:8.15px;line-height:9px;color:#1a1a1a;">$154,828</span>
<span style="left:406.69px;top:342px;font-size:8.15px;line-height:9px;color:#1a1a1a;">13%</span>
<span style="left:429.20px;top:342px;font-size:8.15px;line-height:9px;color:#1a1a1a;">United States</span>
<span style="left:487.20px;top:342px;font-size:8.15px;line-height:9px;color:#1a1a1a;">Seattle</span>
<span style="left:17.70px;top:354px;font-size:8.15px;line-height:9px;color:#1a1a1a;">E04116</span>
<span style="left:46.90px;top:354px;font-size:8.15px;line-height:9px;color:#1a1a1a;clip-path:inset(0 0 0 2px);">rate</span>
<span style="left:131.70px;top:354px;font-size:8.15px;line-height:9px;color:#1a1a1a;">Male</span>
<span style="left:177.20px;top:354px;font-size:8.15px;line-height:9px;color:#1a1a1a;">Caucasian</span>
<span style="left:245.13px;top:354px;font-size:8.15px;line-height:9px;color:#1a1a1a;">64</span>
<span style="left:271.35px;top:354px;font-size:8.15px;line-height:9px;color:#1a1a1a;">11/3/2013</span>
<span style="left:340.31px;top:354px;font-size:8.15px;line-height:9px;color:#1a1a1a;">$186,503</span>
<span style="left:406.69px;top:354px;font-size:8.15px;line-height:9px;color:#1a1a1a;">24%</span>
<span style="left:429.20px;top:354px;font-size:8.15px;line-height:9px;color:#1a1a1a;">United States</span>
<span style="left:487.20px;top:354px;font-size:8.15px;line-height:9px;color:#1a1a1a;">Columbus</span>
<span style="left:17.70px;top:366px;font-size:8.15px;line-height:9px;color:#1a1a1a;">E04625</span>
<span style="left:49.10px;top:366px;font-size:8.15px;line-height:9px;color:#1a1a1a;">ch &amp; Development</span>
<span style="left:131.70px;top:366px;font-size:8.15px;line-height:9px;color:#1a1a1a;">Male</span>
<span style="left:177.20px;top:366px;font-size:8.15px;line-height:9px;color:#1a1a1a;">Asian</span>
<span style="left:245.13px;top:366px;font-size:8.15px;line-height:9px;color:#1a1a1a;">45</span>
<span style="left:275.27px;top:366px;font-size:8.15px;line-height:9px;color:#1a1a1a;">7/9/2002</span>
<span style="left:340.31px;top:366px;font-size:8.15px;line-height:9px;color:#1a1a1a;">$166,331</span>
<span style="left:406.69px;top:366px;font-size:8.15px;line-height:9px;color:#1a1a1a;">18%</span>
<span style="left:429.20px;top:366px;font-size:8.15px;line-height:9px;color:#1a1a1a;">China</span>
<span style="left:487.20px;top:366px;font-size:8.15px;line-height:9px;color:#1a1a1a;">Chongqing</span>
<span style="left:17.70px;top:378px;font-size:8.15px;line-height:9px;color:#1a1a1a;">E03680</span>
<span style="left:49.10px;top:378px;font-size:8.15px;line-height:9px;color:#1a1a1a;">acturing</span>
<span style="left:131.70px;top:378px;font-size:8.15px;line-height:9px;color:#1a1a1a;">Male</span>
<span style="left:177.20px;top:378px;font-size:8.15px;line-height:9px;color:#1a1a1a;">Latino</span>
<span style="left:245.13px;top:378px;font-size:8.15px;line-height:9px;color:#1a1a1a;">56</span>
<span style="left:275.27px;top:378px;font-size:8.15px;line-height:9px;color:#1a1a1a;">1/9/2012</span>
<span style="left:340.31px;top:378px;font-size:8.15px;line-height:9px;color:#1a1a1a;">$146,140</span>
<span style="left:406.69px;top:378px;font-size:8.15px;line-height:9px;color:#1a1a1a;">10%</span>
<span style="left:429.20px;top:378px;font-size:8.15px;line-height:9px;color:#1a1a1a;">Brazil</span>
<span style="left:487.20px;top:378px;font-size:8.15px;line-height:9px;color:#1a1a1a;">Manaus</span>
<span style="left:64.40px;top:197px;font-size:7.44px;line-height:9px;color:#e03030;font-family:'Liberation Serif',serif;">Freezed first column</span>
<svg width="768" height="402" viewBox="0 0 768 402"><rect x="0" y="385" width="768" height="17" fill="#e6e6e6"/><rect x="0" y="384.7" width="768" height="0.8" fill="#c6c6c6"/><rect x="0" y="399" width="768" height="3" fill="#f0f0f0"/><rect x="609" y="399.5" width="25" height="2.5" fill="#c9c9c9"/><g transform="translate(11,389)"><path d="M4 0.6L1 3l3 2.4z" fill="#c6c6c6"/></g><g transform="translate(24.5,389)"><path d="M1 0.6L4 3 1 5.4z" fill="#c6c6c6"/></g><rect x="48.75" y="385" width="27.5" height="12.3" fill="#fff"/><rect x="48.75" y="397" width="27.5" height="1.5" fill="#217346"/></svg>
<span style="left:53.75px;top:387px;font-size:8.07px;line-height:9px;color:#217346;font-weight:700;">Data</span>
<svg width="768" height="402" viewBox="0 0 768 402"><g transform="translate(92.5,387)"><circle cx="5" cy="5" r="4.2" fill="#f4f4f4" stroke="#777" stroke-width="0.8"/><path d="M5 2.6v4.8M2.6 5h4.8" stroke="#777" stroke-width="0.8"/></g><rect x="473.6" y="389.5" width="0.9" height="0.9" fill="#9a9a9a"/><rect x="473.6" y="391.7" width="0.9" height="0.9" fill="#9a9a9a"/><rect x="473.6" y="393.9" width="0.9" height="0.9" fill="#9a9a9a"/><rect x="482.15" y="388.0" width="9.2" height="8.8" fill="#fff" stroke="#c8c8c8" stroke-width="0.8"/><g transform="translate(484.5,390)"><path d="M3.4 0.4L0.8 2.5l2.6 2.1z" fill="#333"/></g><rect x="492" y="388" width="276" height="9" fill="#ececec"/><rect x="579.45" y="388.45" width="184.1" height="8.3" fill="#fff" stroke="#bdbdbd" stroke-width="0.9" rx="1"/><rect x="538.0" y="73.5" width="183.0" height="115" fill="#000" opacity="0.3" filter="url(#sh)"/><rect x="536.9" y="72.4" width="182.2" height="114.2" fill="#fff" stroke="#c8c8c8" stroke-width="0.8"/><rect x="537.5" y="148" width="181" height="37.5" fill="#c6c6c6"/><g transform="translate(546,81.5)"><rect x="6" y="4.2" width="12.4" height="12.2" fill="#fff" stroke="#5a5a5a" stroke-width="0.8"/><rect x="6" y="4.2" width="12.4" height="4" fill="#3a96dd"/><rect x="6" y="4.2" width="4.2" height="12.2" fill="#3a96dd"/><path d="M10.2 4.2v12.2M14.3 4.2v12.2M6 8.2h12.4M6 12.3h12.4" stroke="#fff" stroke-width="0.7"/><path d="M10.2 8.2v8.2M14.3 8.2v8.2M10.2 12.3h8.2M10.2 8.2h8.2" stroke="#6a6a6a" stroke-width="0.7"/><path d="M3.4 0.4v6M0.8 1.9l5.2 3M0.8 4.9l5.2-3" stroke="#2b88d8" stroke-width="0.9"/></g><g transform="translate(546,120.5)"><rect x="0.6" y="2" width="14" height="11" fill="#f6f6f6" stroke="#5a5a5a" stroke-width="0.9"/><rect x="0.6" y="2" width="14" height="3" fill="#3a96dd"/><path d="M0.6 3.5h14" stroke="#bfe0f8" stroke-width="0.6" stroke-dasharray="1 0.7"/><path d="M14.4 9.6v7M11.4 11.4l6 3.5M11.4 14.9l6-3.5" stroke="#2b88d8" stroke-width="1"/></g><g transform="translate(546,157)"><rect x="0.8" y="2" width="13.4" height="12" fill="#ededed" stroke="#5a5a5a" stroke-width="0.9"/><rect x="1.3" y="2.5" width="3.7" height="11" fill="#a8d8f5" stroke="#3a96dd" stroke-width="0.5"/><path d="M14.4 10.6v7M11.4 12.4l6 3.5M11.4 15.9l6-3.5" stroke="#2b88d8" stroke-width="1"/></g></svg>
<span style="left:574.70px;top:77px;font-size:7.26px;line-height:9px;color:#333;font-weight:700;">Unfreeze Panes</span>
<span style="left:574.70px;top:88px;font-size:7.3px;line-height:9px;color:#666;">Unlock all rows and columns to scroll</span>
<span style="left:574.70px;top:98px;font-size:7.3px;line-height:9px;color:#666;">through the entire worksheet.</span>
<span style="left:574.70px;top:114px;font-size:7.4px;line-height:9px;color:#333;letter-spacing:-0.078px;font-weight:700;">Freeze Top Row</span>
<span style="left:574.70px;top:125px;font-size:7.3px;line-height:9px;color:#666;">Keep the top row visible while scrolling</span>
<span style="left:574.70px;top:135px;font-size:7.3px;line-height:9px;color:#666;">through the rest of the worksheet.</span>
<span style="left:574.70px;top:151px;font-size:7.4px;line-height:9px;color:#222;letter-spacing:-0.149px;font-weight:700;">Freeze First Column</span>
<span style="left:574.70px;top:162px;font-size:7.3px;line-height:9px;color:#444;">Keep the first column visible while scrolling</span>
<span style="left:574.70px;top:172px;font-size:7.3px;line-height:9px;color:#444;">through the rest of the worksheet.</span>
<svg width="768" height="402" viewBox="0 0 768 402"><rect x="584.4" y="84.0" width="2.3" height="0.6" fill="#333"/><rect x="614.6" y="121.7" width="3.6" height="0.6" fill="#333"/><rect x="616.0" y="158.8" width="3.8" height="0.6" fill="#222"/><rect x="298.0" y="10.0" width="32.7" height="15.8" fill="none" stroke="#e8111c" stroke-width="2"/><rect x="532.0" y="52.0" width="73.5" height="24.2" fill="none" stroke="#e8111c" stroke-width="2"/><rect x="13.7" y="117.0" width="45.5" height="266" fill="none" stroke="#e8111c" stroke-width="2"/><rect x="537.8" y="148.0" width="181.7" height="37.5" fill="none" stroke="#e8111c" stroke-width="2"/></svg>
</body></html>
